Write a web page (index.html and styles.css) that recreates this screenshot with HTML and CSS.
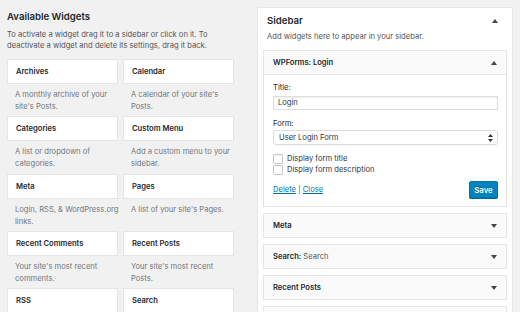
FILE: index.html
```html
<!DOCTYPE html>
<html lang="en">
<head>
    <meta charset="UTF-8">
    <title>Widgets</title>
    <link rel="stylesheet" href="styles.css">
</head>
<body>

<div class="page">
    <div class="available">
        <h2>Available Widgets</h2>
        <p class="intro">To activate a widget drag it to a sidebar or click on it. To deactivate a widget and delete its settings, drag it back.</p>
        <div class="widget-grid">
            <div class="widget">
                <div class="widget-title">Archives</div>
                <div class="widget-desc">A monthly archive of your site's Posts.</div>
            </div>
            <div class="widget">
                <div class="widget-title">Calendar</div>
                <div class="widget-desc">A calendar of your site's Posts.</div>
            </div>
            <div class="widget">
                <div class="widget-title">Categories</div>
                <div class="widget-desc">A list or dropdown of categories.</div>
            </div>
            <div class="widget">
                <div class="widget-title">Custom Menu</div>
                <div class="widget-desc">Add a custom menu to your sidebar.</div>
            </div>
            <div class="widget">
                <div class="widget-title">Meta</div>
                <div class="widget-desc"><span class="nowrap">Login, RSS, &amp; WordPress.org</span> links.</div>
            </div>
            <div class="widget">
                <div class="widget-title">Pages</div>
                <div class="widget-desc">A list of your site's Pages.</div>
            </div>
            <div class="widget">
                <div class="widget-title">Recent Comments</div>
                <div class="widget-desc">Your site's most recent comments.</div>
            </div>
            <div class="widget">
                <div class="widget-title">Recent Posts</div>
                <div class="widget-desc">Your site's most recent Posts.</div>
            </div>
            <div class="widget">
                <div class="widget-title">RSS</div>
                <div class="widget-desc">Entries from any RSS or Atom feed.</div>
            </div>
            <div class="widget">
                <div class="widget-title">Search</div>
                <div class="widget-desc">A search form for your site.</div>
            </div>
        </div>
    </div>

    <div class="sidebar">
        <div class="sidebar-head">
            <h3>Sidebar</h3>
            <svg class="arrow" width="6" height="4" viewBox="0 0 6 4"><path d="M0 4 L3 0 L6 4 Z" fill="#444"/></svg>
        </div>
        <p class="sidebar-desc">Add widgets here to appear in your sidebar.</p>

        <div class="sb-widget open">
            <div class="sb-head">
                <span class="sb-name">WPForms: Login</span>
                <svg class="arrow" width="6" height="4" viewBox="0 0 6 4"><path d="M0 4 L3 0 L6 4 Z" fill="#444"/></svg>
            </div>
            <div class="sb-body">
                <label class="field-label">Title:</label>
                <div class="input">Login</div>
                <label class="field-label form-label">Form:</label>
                <div class="select">
                    <span>User Login Form</span>
                    <svg width="5" height="8" viewBox="0 0 5 8"><path d="M0 3 L2.5 0 L5 3 Z M0 5 L2.5 8 L5 5 Z" fill="#333"/></svg>
                </div>
                <div class="check first"><span class="box"></span>Display form title</div>
                <div class="check"><span class="box"></span>Display form description</div>
                <div class="actions">
                    <div class="links"><a href="#">Delete</a> | <a href="#">Close</a></div>
                    <button>Save</button>
                </div>
            </div>
        </div>

        <div class="sb-widget">
            <div class="sb-head">
                <span class="sb-name">Meta</span>
                <svg class="arrow" width="6" height="4" viewBox="0 0 6 4"><path d="M0 0 L3 4 L6 0 Z" fill="#444"/></svg>
            </div>
        </div>
        <div class="sb-widget">
            <div class="sb-head">
                <span class="sb-name">Search:<span class="sb-sub"> Search</span></span>
                <svg class="arrow" width="6" height="4" viewBox="0 0 6 4"><path d="M0 0 L3 4 L6 0 Z" fill="#444"/></svg>
            </div>
        </div>
        <div class="sb-widget">
            <div class="sb-head">
                <span class="sb-name">Recent Posts</span>
                <svg class="arrow" width="6" height="4" viewBox="0 0 6 4"><path d="M0 0 L3 4 L6 0 Z" fill="#444"/></svg>
            </div>
        </div>
        <div class="sb-widget">
            <div class="sb-head"></div>
        </div>
    </div>
</div>

</body>
</html>
```

FILE: styles.css
```css
body {
    margin: 0;
    background: #f1f1f1;
    font-family: Inter, "Liberation Sans", sans-serif;
    font-size: 7.6px;
    color: #444;
    height: 312px;
    overflow: hidden;
}
.page {
    display: flex;
    padding-left: 7px;
}
.available {
    width: 227px;
}
h2 {
    margin: 10px 0 0;
    font-size: 9.6px;
    line-height: 14px;
    font-weight: 600;
    color: #23282d;
}
.intro {
    margin: 5px 0 0;
    line-height: 11px;
    color: #555;
}
.widget-grid {
    display: grid;
    grid-template-columns: 111px 111px;
    column-gap: 5px;
    grid-auto-rows: 57.25px;
    margin-top: 8px;
}
.widget-title {
    height: 23px;
    line-height: 23px;
    padding-left: 8px;
    background: #fff;
    border: 1px solid #e5e5e5;
    font-weight: 600;
    color: #23282d;
}
.widget-desc {
    padding: 5px 3px 0 8px;
    line-height: 12px;
    color: #72777c;
}
.nowrap {
    white-space: nowrap;
}
.sidebar {
    width: 244px;
    margin: 7px 0 0 23px;
    background: #fff;
    border: 1px solid #e5e5e5;
    border-bottom: none;
    padding: 0 5px 0 5px;
}
.sidebar-head {
    display: flex;
    justify-content: space-between;
    align-items: center;
    padding: 6px 9px 0 4px;
}
h3 {
    margin: 0;
    font-size: 9.6px;
    line-height: 14px;
    font-weight: 600;
    color: #23282d;
}
.sidebar-desc {
    margin: 3px 0 0 4px;
    line-height: 11px;
    color: #555;
}
.sb-widget {
    margin-top: 6px;
    border: 1px solid #e5e5e5;
    background: #fafafa;
}
.sidebar-desc + .sb-widget {
    margin-top: 8px;
}
.sb-head {
    height: 23px;
    display: flex;
    justify-content: space-between;
    align-items: center;
    padding: 0 9px 0 9px;
}
.sb-name {
    font-weight: 600;
    color: #23282d;
}
.sb-sub {
    font-weight: 400;
    color: #555;
}
.open .sb-head {
    border-bottom: 1px solid #e5e5e5;
}
.sb-body {
    background: #fff;
    padding: 7px 8px 8px 9px;
}
.field-label {
    display: block;
    line-height: 12px;
    color: #23282d;
}
.form-label {
    margin-top: 8px;
}
.input {
    margin-top: 2px;
    height: 12px;
    line-height: 12px;
    padding: 0 4px;
    border: 1px solid #ddd;
    box-shadow: inset 0 1px 2px rgba(0, 0, 0, 0.07);
    color: #32373c;
}
.select {
    height: 13px;
    display: flex;
    justify-content: space-between;
    align-items: center;
    padding: 0 4px 0 5px;
    border: 1px solid #ddd;
    border-radius: 3px;
    color: #32373c;
    box-shadow: 0 1px 1px rgba(0, 0, 0, 0.04);
}
.check {
    display: flex;
    align-items: center;
    height: 11px;
    line-height: 11px;
    color: #32373c;
}
.check.first {
    margin-top: 8px;
}
.box {
    width: 8px;
    height: 8px;
    border: 1px solid #c8c8c8;
    border-radius: 1px;
    margin-right: 4px;
    box-shadow: inset 0 1px 1px rgba(0, 0, 0, 0.06);
}
.actions {
    display: flex;
    justify-content: space-between;
    align-items: center;
    margin-top: 6px;
}
.links {
    color: #555;
}
.links a {
    color: #0073aa;
}
button {
    font-family: inherit;
    font-size: 7.8px;
    font-weight: 600;
    height: 17px;
    width: 29px;
    padding: 0;
    background: #0085ba;
    border: 1px solid #0073aa;
    border-radius: 2px;
    color: #fff;
    box-shadow: 0 1px 0 #006799;
    text-shadow: 0 -1px 1px #006799;
}
```
